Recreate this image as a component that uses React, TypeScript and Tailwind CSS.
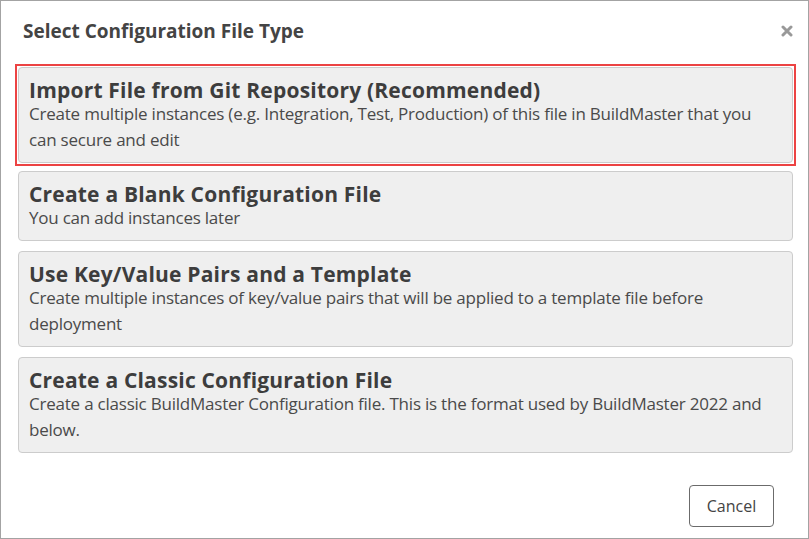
const options = [
  {
    title: "Import File from Git Repository (Recommended)",
    text: "Create multiple instances (e.g. Integration, Test, Production) of this file in BuildMaster that you can secure and edit",
    selected: true,
  },
  {
    title: "Create a Blank Configuration File",
    text: "You can add instances later",
  },
  {
    title: "Use Key/Value Pairs and a Template",
    text: "Create multiple instances of key/value pairs that will be applied to a template file before deployment",
  },
  {
    title: "Create a Classic Configuration File",
    text: "Create a classic BuildMaster Configuration file. This is the format used by BuildMaster 2022 and below.",
  },
];

function Card({ title, text }: { title: string; text: string }) {
  return (
    <div className="bg-[#efefef] border border-[#ccc] rounded-[4px] pt-[11px] pb-[9px] px-[10px]">
      <div className="text-[21px] font-bold leading-[22px] tracking-[0.2px] text-[#3d3d3d]">
        {title}
      </div>
      <div className="text-[17px] leading-[26px] tracking-[-0.22px] text-[#4a4a4a]">
        {text}
      </div>
    </div>
  );
}

export default function App() {
  return (
    <div
      className="w-[809px] h-[539px] bg-white border border-[#a3a3a3] flex flex-col text-[#444]"
      style={{ fontFamily: '"Open Sans", "Noto Sans", sans-serif' }}
    >
      <div className="flex items-start justify-between pl-[22px] pr-[15px] pt-[17px] h-[62px]">
        <h1 className="text-[19px] font-bold leading-[26px]">
          Select Configuration File Type
        </h1>
        <svg width="12" height="12" viewBox="0 0 12 12" className="mt-[7px]">
          <path d="M2 2L10 10M10 2L2 10" stroke="#999" strokeWidth="3" strokeLinecap="round" />
        </svg>
      </div>

      <div className="flex flex-col gap-[10px] pl-[17px] pr-[15px] pt-[4px]">
        {options.map((o) =>
          o.selected ? (
            <div key={o.title} className="-mx-[3px] -mt-[3px] -mb-[5px] border-2 border-[#ec4343] p-px">
              <Card title={o.title} text={o.text} />
            </div>
          ) : (
            <Card key={o.title} title={o.title} text={o.text} />
          )
        )}
      </div>

      <div className="flex-1" />
      <div className="flex justify-end pr-[34px] pb-[11px]">
        <button className="w-[85px] h-[42px] border border-[#6b6b6b] rounded-[4px] bg-white text-[16px] text-[#444]">
          Cancel
        </button>
      </div>
    </div>
  );
}
